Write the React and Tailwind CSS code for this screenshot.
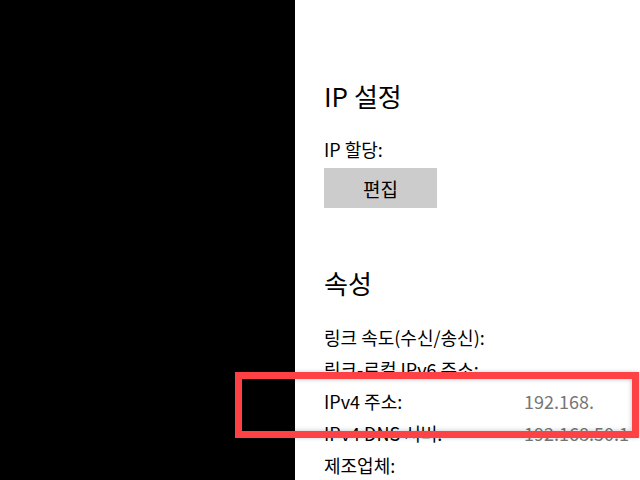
export default function App() {
  const rows = [
    { label: '링크 속도(수신/송신):', value: '' },
    { label: '링크-로컬 IPv6 주소:', value: '' },
    { label: 'IPv4 주소:', value: '192.168.' },
    { label: 'IPv4 DNS 서버:', value: '192.168.50.1' },
    { label: '제조업체:', value: '' },
  ];

  return (
    <div
      className="relative flex h-[480px] w-[640px] overflow-hidden bg-white text-black"
      style={{ fontFamily: '"Noto Sans CJK KR", "Noto Sans", sans-serif' }}
    >
      <div className="w-[295px] shrink-0 bg-black" />

      <div className="flex flex-1 flex-col pl-[29px] pt-[78px]">
        <h2 className="text-[26px] leading-[36px] font-normal">IP 설정</h2>
        <div className="mt-[23px] text-[18px] leading-[24px]">IP 할당:</div>
        <button className="mt-[7px] flex h-[40px] w-[113px] shrink-0 items-center justify-center bg-[#cccccc] text-[19px] leading-none">
          편집
        </button>

        <h2 className="mt-[57px] text-[26px] leading-[36px] font-normal">속성</h2>
        <div className="mt-[20px] flex flex-col">
          {rows.map((r) => (
            <div key={r.label} className="flex h-[32px] shrink-0 items-center text-[18px] whitespace-nowrap">
              <span className="w-[200px] shrink-0">{r.label}</span>
              <span className="text-[#767676]">{r.value}</span>
            </div>
          ))}
        </div>
      </div>

      <div className="absolute left-[235px] top-[372px] h-[66px] w-[404px] border-[7px] border-[#fd4144] shadow-[inset_0_0_5px_rgba(0,0,0,0.25),0_0_4px_rgba(0,0,0,0.2)]" />
    </div>
  );
}
